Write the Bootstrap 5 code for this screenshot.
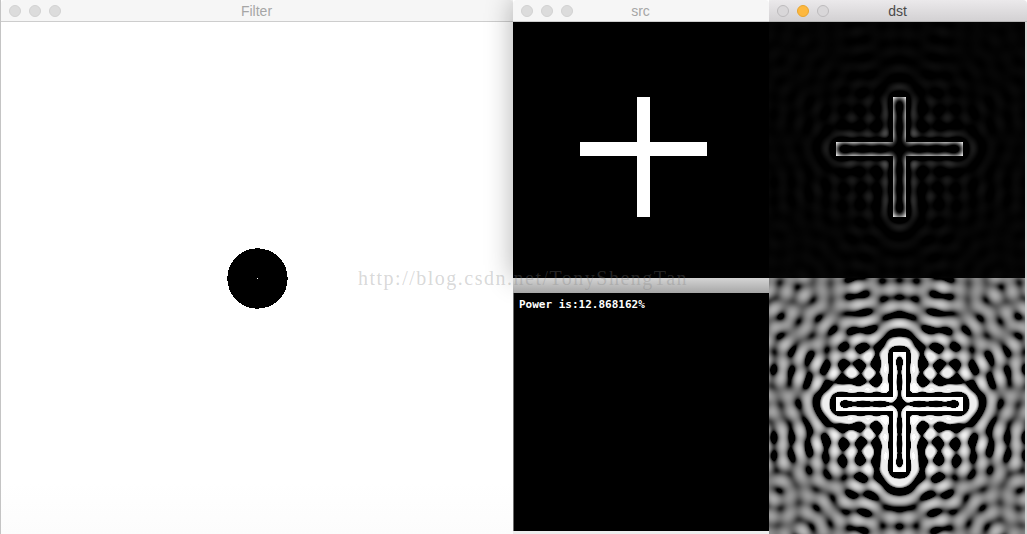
<!DOCTYPE html>
<html lang="en">
<head>
  <meta charset="UTF-8" />
  <meta name="viewport" content="width=device-width, initial-scale=1" />
  <title>Filter src dst</title>
  <link href="https://cdn.jsdelivr.net/npm/bootstrap@5.3.3/dist/css/bootstrap.min.css" rel="stylesheet" />
  <style>
    html, body {
      background-color: #fff;
      overflow: hidden;
    }
    .desk {
      width: 1027px;
      height: 534px;
      overflow: hidden;
    }
    .win-filter {
      width: 513px;
      height: 534px;
      border-left: 1px solid #c4c4c4;
    }
    .win-grid {
      display: grid;
      grid-template-columns: 256px 258px;
      grid-template-rows: 278px 256px;
    }
    .win-src {
      position: relative;
      z-index: 1;
      box-shadow: 0 0 26px rgba(0, 0, 0, .32);
    }
    .win-dst, .win-power, .pane-bottom {
      position: relative;
      z-index: 2;
    }
    .title-bar {
      height: 22px;
      flex: none;
      position: relative;
      background-color: #f6f6f6;
      border-bottom: 1px solid #cdcdcd;
      border-radius: 4px 4px 0 0;
      padding-left: 8px;
      font-family: "Liberation Sans", sans-serif;
      font-size: 14px;
      line-height: 21px;
      color: #a6a6a6;
    }
    .title-bar.on {
      background: linear-gradient(#ebe9eb, #d3d1d3);
      color: #4a4a4a;
      border-bottom-color: #b5b5b5;
    }
    .title-name {
      flex: 1;
      text-align: center;
      padding-right: 69px;
      padding-top: 1px;
    }
    .dot {
      width: 12px;
      height: 12px;
      border-radius: 50%;
      background-color: #dcdcdc;
      border: 1px solid #d2d2d2;
      flex: none;
    }
    .title-bar.on .dot {
      background-color: #d9d7d9;
      border-color: #bdbbbd;
    }
    .title-bar.on .dot.busy {
      background-color: #fdb83f;
      border-color: #e9a52f;
    }
    .filter-body {
      height: 512px;
      padding-left: 1px;
      background: linear-gradient(#fff 90%, #fcfcfc);
    }
    .disc {
      display: block;
      width: 61px;
      height: 61px;
    }
    .pic {
      display: block;
    }
    .pic-dark {
      width: 256px;
      height: 256px;
      background-color: #000;
    }
    .dst-edge {
      border-right: 2px solid #d8d8d8;
      background-color: #000;
    }
    .win-power {
      height: 256px;
      background-color: #ededed;
    }
    .power-strip {
      height: 15px;
      background: linear-gradient(#d4d4d4, #a6a6a6);
    }
    .power-body {
      height: 238px;
      background-color: #000;
      border-left: 1px solid #6e6e6e;
      padding: 5px 0 0 5px;
      color: #fff;
      font-family: "DejaVu Sans Mono", monospace;
      font-size: 11px;
      font-weight: 700;
      line-height: 13px;
    }
    .mark-text {
      position: absolute;
      z-index: 5;
      left: 358px;
      top: 266px;
      font-family: "Liberation Serif", serif;
      font-size: 20px;
      line-height: 24px;
      letter-spacing: 1.5px;
      white-space: nowrap;
      color: rgba(125, 125, 125, .3);
    }
  </style>
</head>
<body>

<div class="desk d-flex position-relative">

  <!-- Filter window -->
  <div class="win-filter d-flex flex-column">
    <div class="title-bar d-flex align-items-center gap-2">
      <span class="dot"></span><span class="dot"></span><span class="dot"></span>
      <span class="title-name">Filter</span>
    </div>
    <div class="filter-body d-flex align-items-center justify-content-center">
      <svg class="disc" viewBox="0 0 61 61" shape-rendering="crispEdges">
        <circle cx="30.5" cy="30.5" r="30.2" fill="#000" />
        <rect x="30" y="30" width="1" height="1" fill="#fff" />
      </svg>
    </div>
  </div>

  <div class="win-grid">
    <!-- src -->
    <div class="win-src d-flex flex-column">
      <div class="title-bar d-flex align-items-center gap-2">
        <span class="dot"></span><span class="dot"></span><span class="dot"></span>
        <span class="title-name">src</span>
      </div>
      <svg class="pic pic-dark" viewBox="0 0 256 256" shape-rendering="crispEdges">
        <rect x="67" y="120" width="127" height="14" fill="#fff" />
        <rect x="124" y="75" width="13" height="120" fill="#fff" />
      </svg>
    </div>

    <!-- dst -->
    <div class="win-dst d-flex flex-column">
      <div class="title-bar on d-flex align-items-center gap-2">
        <span class="dot"></span><span class="dot busy"></span><span class="dot"></span>
        <span class="title-name">dst</span>
      </div>
      <div class="dst-edge"><canvas id="dstPic" class="pic" width="256" height="256"></canvas></div>
    </div>

    <!-- text window under src -->
    <div class="win-power">
      <div class="power-strip"></div>
      <div class="power-body">Power is:12.868162%</div>
    </div>

    <div class="pane-bottom dst-edge"><canvas id="logPic" class="pic" width="256" height="256"></canvas></div>
  </div>

  <div class="mark-text">http://blog.csdn.net/TonyShengTan</div>
</div>

<script>
// same pipeline as the demo: pad to 512, ideal high pass r=30 keeping DC
const N = 512;

function fft(re, im, inv) {
  const n = re.length;
  for (let i = 1, j = 0; i < n; i++) {
    let bit = n >> 1;
    for (; j & bit; bit >>= 1) j ^= bit;
    j ^= bit;
    if (i < j) {
      let t = re[i]; re[i] = re[j]; re[j] = t;
      t = im[i]; im[i] = im[j]; im[j] = t;
    }
  }
  for (let len = 2; len <= n; len <<= 1) {
    const ang = 2 * Math.PI / len * (inv ? 1 : -1);
    for (let i = 0; i < n; i += len) {
      for (let k = 0; k < len / 2; k++) {
        const wr = Math.cos(ang * k), wi = Math.sin(ang * k);
        const a = i + k, b = i + k + len / 2;
        const xr = re[b] * wr - im[b] * wi;
        const xi = re[b] * wi + im[b] * wr;
        re[b] = re[a] - xr; im[b] = im[a] - xi;
        re[a] += xr; im[a] += xi;
      }
    }
  }
}

function fft2(re, im, inv) {
  const r = new Float64Array(N), c = new Float64Array(N);
  for (let y = 0; y < N; y++) {
    for (let x = 0; x < N; x++) { r[x] = re[y * N + x]; c[x] = im[y * N + x]; }
    fft(r, c, inv);
    for (let x = 0; x < N; x++) { re[y * N + x] = r[x]; im[y * N + x] = c[x]; }
  }
  for (let x = 0; x < N; x++) {
    for (let y = 0; y < N; y++) { r[y] = re[y * N + x]; c[y] = im[y * N + x]; }
    fft(r, c, inv);
    for (let y = 0; y < N; y++) { re[y * N + x] = r[y]; im[y * N + x] = c[y]; }
  }
}

const re = new Float64Array(N * N), im = new Float64Array(N * N);
for (let y = 0; y < 256; y++) {
  for (let x = 0; x < 256; x++) {
    const on = (y >= 120 && y < 134 && x >= 67 && x < 194) || (x >= 124 && x < 137 && y >= 75 && y < 195);
    re[y * N + x] = on ? 1 : 0;
  }
}
fft2(re, im, false);
for (let v = 0; v < N; v++) {
  for (let u = 0; u < N; u++) {
    const du = u < N / 2 ? u : u - N, dv = v < N / 2 ? v : v - N;
    const d = Math.sqrt(du * du + dv * dv);
    if (d <= 30 && d > 0) { re[v * N + u] = 0; im[v * N + u] = 0; }
  }
}
fft2(re, im, true);

// negative values get clipped to black, not folded
const val = new Float64Array(N * N);
for (let i = 0; i < N * N; i++) {
  val[i] = Math.max(0, re[i] / (N * N));
}

function paint(id, offY, toGrey) {
  const ctx = document.getElementById(id).getContext("2d");
  const img = ctx.createImageData(256, 256);
  for (let y = 0; y < 256; y++) {
    for (let x = 0; x < 256; x++) {
      const g = toGrey(val[Math.min(y + offY, 511) * N + x]);
      const p = (y * 256 + x) * 4;
      img.data[p] = img.data[p + 1] = img.data[p + 2] = g;
      img.data[p + 3] = 255;
    }
  }
  ctx.putImageData(img, 0, 0);
}

paint("dstPic", 0, m => Math.min(255, m * 320));
paint("logPic", 1, m => {
  const t = (Math.log(m + 1e-6) - Math.log(0.003)) / (Math.log(0.05) - Math.log(0.003));
  return Math.max(0, Math.min(1, t)) * (m > 0.12 ? 255 : 238);
});
</script>
<script src="https://cdn.jsdelivr.net/npm/bootstrap@5.3.3/dist/js/bootstrap.bundle.min.js"></script>
</body>
</html>
